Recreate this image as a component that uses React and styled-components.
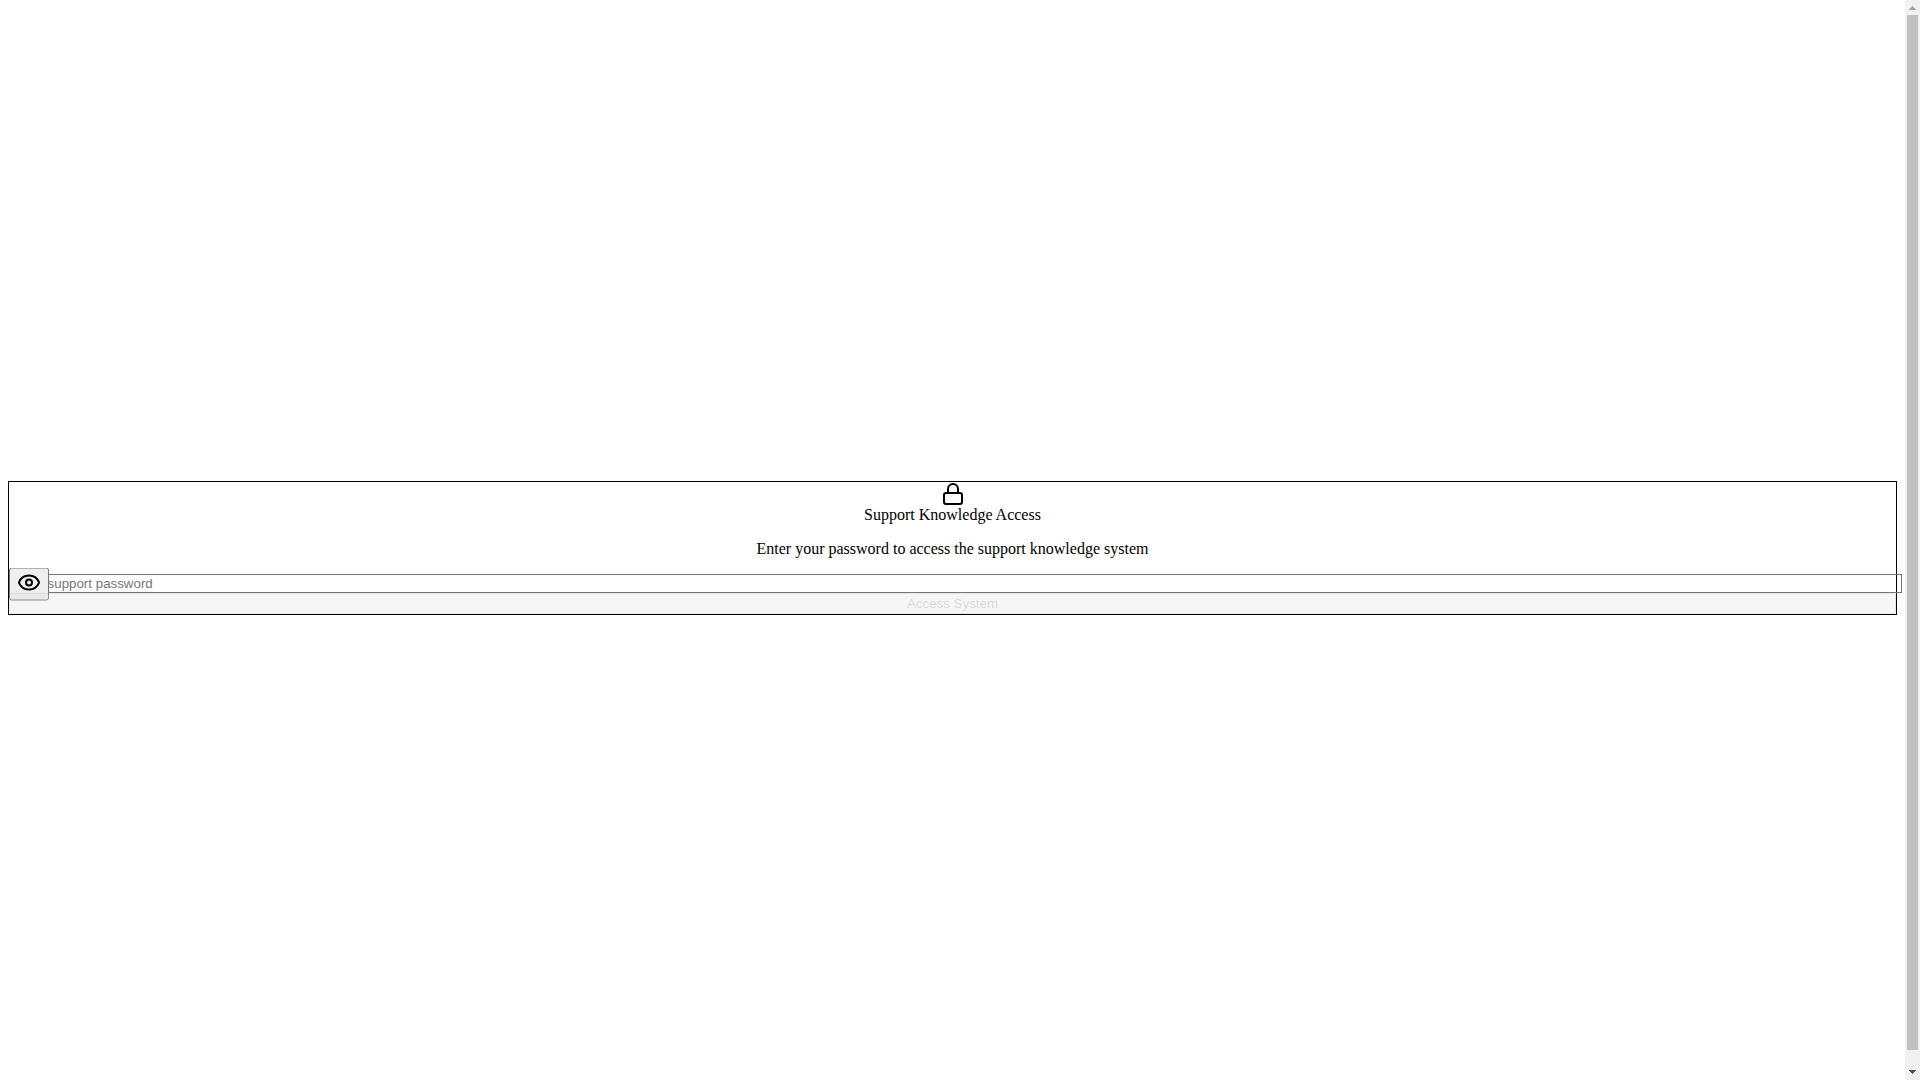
import {
    useEffect,
    useRef,
    useState,
} from "react";
import styled, { createGlobalStyle } from "styled-components";
import { Eye, EyeOff, Lock } from "lucide-react";

const GlobalStyle = createGlobalStyle
    `
        body {
            margin: 0;
            background: white;
            color: black;
            font-family: "Liberation Serif", "Times New Roman", serif;
            font-size: 16px;
        }
    `;

const Shell = styled.div
    `
        display: flex;
        height: 100vh;
    `;

const ScrollArea = styled.div
    `
        flex: 1;
        min-width: 0;
        overflow-y: auto;
        scrollbar-width: none;
    `;

const Scrollbar = styled.div
    `
        display: flex;
        flex-direction: column;
        flex: none;
        width: 15px;
        background: #f1f1f1;
    `;

const ArrowButton = styled.button
    `
        display: block;
        height: 15px;
        padding: 0;
        border: 0;
        background: transparent;
        color: #505050;

        &:disabled {
            color: #a3a3a3;
        }

        svg {
            display: block;
        }
    `;

const Track = styled.div
    `
        flex: 1;
        min-height: 0;
        padding: 0 2px;
    `;

const Thumb = styled.div
    `
        background: #c1c1c1;
    `;

const Page = styled.main
    `
        display: flex;
        align-items: center;
        justify-content: center;
        min-height: 100vh;
        padding: 8px;
    `;

const Card = styled.section
    `
        flex: 1;
        min-width: 0;
        border: 1px solid black;
    `;

const CardHeader = styled.header
    `
        display: flex;
        flex-direction: column;
        align-items: center;
        text-align: center;
        line-height: 18px;
    `;

const Title = styled.h1
    `
        margin: 0;
        font-size: 16px;
        font-weight: 400;
    `;

const Description = styled.p
    `
        margin: 16px 0;
    `;

const Form = styled.form
    `
        display: flex;
        flex-direction: column;
    `;

const PasswordField = styled.div
    `
        position: relative;
        display: flex;
    `;

const PasswordInput = styled.input
    `
        box-sizing: content-box;
        flex: none;
        width: 100%;
        padding: 1px 2px;
        border: 1px solid #767676;
        background: transparent;
        font-family: "Liberation Sans", Arial, sans-serif;
    `;

const ToggleButton = styled.button
    `
        position: absolute;
        top: 50%;
        left: 0;
        transform: translateY(-50%);
    `;

const SubmitButton = styled.button
    `
        position: relative;
        width: 100%;
        font-family: "Liberation Sans", Arial, sans-serif;

        &:disabled {
            opacity: 0.5;
        }
    `;

const ScrollPane = ({ children }) => {

    const areaRef = useRef(null);
    const [scroll, setScroll] = useState({ top: 0, visible: 1, total: 1 });

    const measure = () => {
        const area = areaRef.current;
        setScroll({
            top: area.scrollTop,
            visible: area.clientHeight,
            total: area.scrollHeight,
        });
    };

    const scrollBy = (amount) => {
        areaRef.current.scrollBy({ top: amount });
    };

    useEffect(() => {
        measure();
        window.addEventListener("resize", measure);
        return () => window.removeEventListener("resize", measure);
    }, []);

    return (
        <Shell>
            <ScrollArea ref={areaRef} onScroll={measure}>
                {children}
            </ScrollArea>
            <Scrollbar>
                <ArrowButton
                    type="button"
                    aria-label="Scroll up"
                    disabled={scroll.top <= 0}
                    onClick={() => scrollBy(-40)}>
                    <svg width="15" height="15" fill="currentColor" shapeRendering="crispEdges">
                        <path d="M4 10h7v-1h-1v-1h-1v-1h-1v-1h-1v1h-1v1h-1v1h-1z" />
                    </svg>
                </ArrowButton>
                <Track>
                    <Thumb
                        style={{
                            height: `${(scroll.visible / scroll.total) * 100}%`,
                            transform: `translateY(${(scroll.top / scroll.visible) * 100}%)`,
                        }} />
                </Track>
                <ArrowButton
                    type="button"
                    aria-label="Scroll down"
                    disabled={scroll.top + scroll.visible >= scroll.total}
                    onClick={() => scrollBy(40)}>
                    <svg width="15" height="15" fill="currentColor" shapeRendering="crispEdges">
                        <path d="M4 5h7v1h-1v1h-1v1h-1v1h-1v-1h-1v-1h-1v-1h-1z" />
                    </svg>
                </ArrowButton>
            </Scrollbar>
        </Shell>
    );
};

const App = () => {

    const [password, setPassword] = useState("");
    const [isVisible, toggleVisible] = useState(false);

    const setToggleVisible = () => {
        toggleVisible(!isVisible);
    };

    const handleSubmit = (event) => {
        event.preventDefault();
    };

    return (
        <>
            <GlobalStyle />
            <ScrollPane>
                <Page>
                    <Card>
                        <CardHeader>
                            <Lock size={24} />
                            <Title>Support Knowledge Access</Title>
                            <Description>
                                Enter your password to access the support knowledge system
                            </Description>
                        </CardHeader>
                        <Form onSubmit={handleSubmit}>
                            <PasswordField>
                                <PasswordInput
                                    type={isVisible ? "text" : "password"}
                                    aria-label="Support password"
                                    placeholder="Enter support password"
                                    value={password}
                                    onChange={(event) => setPassword(event.target.value)} />
                                <ToggleButton
                                    type="button"
                                    aria-label={isVisible ? "Hide password" : "Show password"}
                                    onClick={setToggleVisible}>
                                    {isVisible ? <EyeOff size={24} /> : <Eye size={24} />}
                                </ToggleButton>
                            </PasswordField>
                            <SubmitButton type="submit" disabled={!password}>
                                Access System
                            </SubmitButton>
                        </Form>
                    </Card>
                </Page>
            </ScrollPane>
        </>
    );
};

export default App;
